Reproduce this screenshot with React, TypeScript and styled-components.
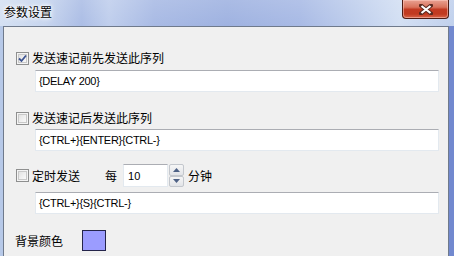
import React from "react";
import styled, { createGlobalStyle } from "styled-components";

const Global = createGlobalStyle`
  html, body { margin: 0; padding: 0; width: 454px; height: 256px; overflow: hidden; background: #f0f0f0; }
  * { box-sizing: border-box; }
`;

const CJK = `"Noto Sans CJK SC", "Microsoft YaHei", sans-serif`;
const LATIN = `"Liberation Sans", "DejaVu Sans", sans-serif`;

const Window = styled.div`
  width: 454px;
  height: 256px;
  display: flex;
  flex-direction: column;
  background:
    linear-gradient(to bottom, rgba(255,255,255,0.35) 0%, rgba(255,255,255,0) 40%),
    linear-gradient(to right, #c6d6ee 0%, #b3c6e8 10%, #8ea6dc 18%, #a9bde6 24%, #8aa2db 34%, #7d97d6 50%, #8aa2dc 66%, #a8bde6 78%, #c3d4ef 88%, #aac0e6 100%);
  overflow: hidden;
`;

const TitleBar = styled.div`
  height: 26px;
  flex: none;
  display: flex;
  align-items: flex-start;
  justify-content: space-between;
  padding: 0 4px 0 4px;
`;

const Title = styled.div`
  font-family: ${CJK};
  font-size: 12px;
  line-height: 16px;
  margin-top: 4px;
  color: #000;
  text-shadow: 0 0 6px #fff, 0 0 4px #fff, 0 0 2px #fff;
`;

const CloseButton = styled.div`
  width: 47px;
  height: 19px;
  margin-right: 1px;
  border: 1px solid #4d1c14;
  border-top: none;
  border-radius: 0 0 4px 4px;
  background:
    linear-gradient(to bottom, #e9a292 0%, #d9735c 40%, #c23a22 52%, #c13a20 78%, #d9664a 100%);
  box-shadow: inset 0 0 0 1px rgba(255,210,200,0.5);
  display: flex;
  align-items: center;
  justify-content: center;
`;

const FrameBody = styled.div`
  flex: 1;
  display: flex;
  padding: 0 5px 0 3px;
  background: linear-gradient(to right, #b7c9e8 0px, #b7c9e8 3px, transparent 3px, transparent 449px, #7289cf 449px);
`;

const Client = styled.div`
  flex: 1;
  background: #f0f0f0;
  border: 1px solid #6f7a8c;
  border-bottom: none;
  padding: 21px 9px 0 12px;
  display: flex;
  flex-direction: column;
`;

const Row = styled.div<{ $mt?: number; $h?: number }>`
  display: flex;
  align-items: center;
  height: ${(p) => p.$h ?? 20}px;
  margin-top: ${(p) => p.$mt ?? 0}px;
`;

const Box = styled.span<{ $checked?: boolean }>`
  width: 13px;
  height: 13px;
  flex: none;
  border: 1px solid #8e8f8f;
  background: linear-gradient(135deg, #dcdcdc 0%, #f2f2f2 60%, #ffffff 100%);
  box-shadow: inset 0 0 0 1px #f4f4f4, inset 0 0 0 2px #c9c9c9;
  display: flex;
  align-items: center;
  justify-content: center;
  margin-right: 3px;
`;

const Label = styled.span<{ $ml?: number }>`
  font-family: ${CJK};
  font-size: 12px;
  line-height: 16px;
  color: #000;
  margin-left: ${(p) => p.$ml ?? 0}px;
  white-space: nowrap;
`;

const TextBox = styled.div<{ $mt?: number }>`
  margin-top: ${(p) => p.$mt ?? 0}px;
  margin-left: 19px;
  height: 22px;
  background: #fff;
  border: 1px solid #e3e9ef;
  border-top-color: #abadb3;
  display: flex;
  align-items: center;
  padding-left: 3px;
  font-family: ${LATIN};
  font-size: 11px;
  letter-spacing: -0.3px;
  color: #000;
`;

const SpinInput = styled.div`
  width: 45px;
  height: 23px;
  margin-left: 6px;
  background: #fff;
  border: 1px solid #e3e9ef;
  border-top-color: #abadb3;
  display: flex;
  align-items: center;
  padding-left: 4px;
  font-family: ${LATIN};
  font-size: 11px;
  color: #000;
`;

const SpinButtons = styled.div`
  display: flex;
  flex-direction: column;
  height: 23px;
  width: 15px;
  margin-left: 1px;
  margin-right: 4px;
`;

const SpinBtn = styled.div`
  flex: 1;
  border: 1px solid #c3c7cd;
  border-radius: 2px;
  background: linear-gradient(to bottom, #f6f6f6, #e2e4e8);
  display: flex;
  align-items: center;
  justify-content: center;
`;

const Swatch = styled.div`
  width: 24px;
  height: 21px;
  margin-left: 19px;
  border: 1px solid #24244a;
  background: #9b9cff;
`;

const Check = () => (
  <svg width="9" height="9" viewBox="0 0 9 9">
    <path d="M1 4.5 L3.5 7 L8 1.5" fill="none" stroke="#3c5391" strokeWidth="1.8" />
  </svg>
);

const Arrow = ({ up }: { up?: boolean }) => (
  <svg width="7" height="4" viewBox="0 0 7 4">
    <path d={up ? "M0 4 L3.5 0 L7 4 Z" : "M0 0 L3.5 4 L7 0 Z"} fill="#4d6185" />
  </svg>
);

const CloseX = () => (
  <svg width="14" height="11" viewBox="0 0 14 11">
    <path d="M2 1.5 L12 9.5 M12 1.5 L2 9.5" stroke="#5a2a20" strokeWidth="4" strokeLinecap="square" />
    <path d="M2.5 2 L11.5 9 M11.5 2 L2.5 9" stroke="#ffffff" strokeWidth="2.2" />
  </svg>
);

export default function App() {
  return (
    <>
      <Global />
      <Window>
        <TitleBar>
          <Title>参数设置</Title>
          <CloseButton>
            <CloseX />
          </CloseButton>
        </TitleBar>
        <FrameBody>
          <Client>
            <Row>
              <Box $checked>
                <Check />
              </Box>
              <Label>发送速记前先发送此序列</Label>
            </Row>
            <TextBox $mt={2}>{"{DELAY 200}"}</TextBox>

            <Row $mt={16}>
              <Box />
              <Label>发送速记后发送此序列</Label>
            </Row>
            <TextBox $mt={1}>{"{CTRL+}{ENTER}{CTRL-}"}</TextBox>

            <Row $mt={13} $h={23}>
              <Box />
              <Label>定时发送</Label>
              <Label $ml={25}>每</Label>
              <SpinInput>10</SpinInput>
              <SpinButtons>
                <SpinBtn>
                  <Arrow up />
                </SpinBtn>
                <SpinBtn>
                  <Arrow />
                </SpinBtn>
              </SpinButtons>
              <Label>分钟</Label>
            </Row>
            <TextBox $mt={5}>{"{CTRL+}{S}{CTRL-}"}</TextBox>

            <Row $mt={16} $h={21}>
              <Label $ml={-1}>背景颜色</Label>
              <Swatch />
            </Row>
          </Client>
        </FrameBody>
      </Window>
    </>
  );
}
